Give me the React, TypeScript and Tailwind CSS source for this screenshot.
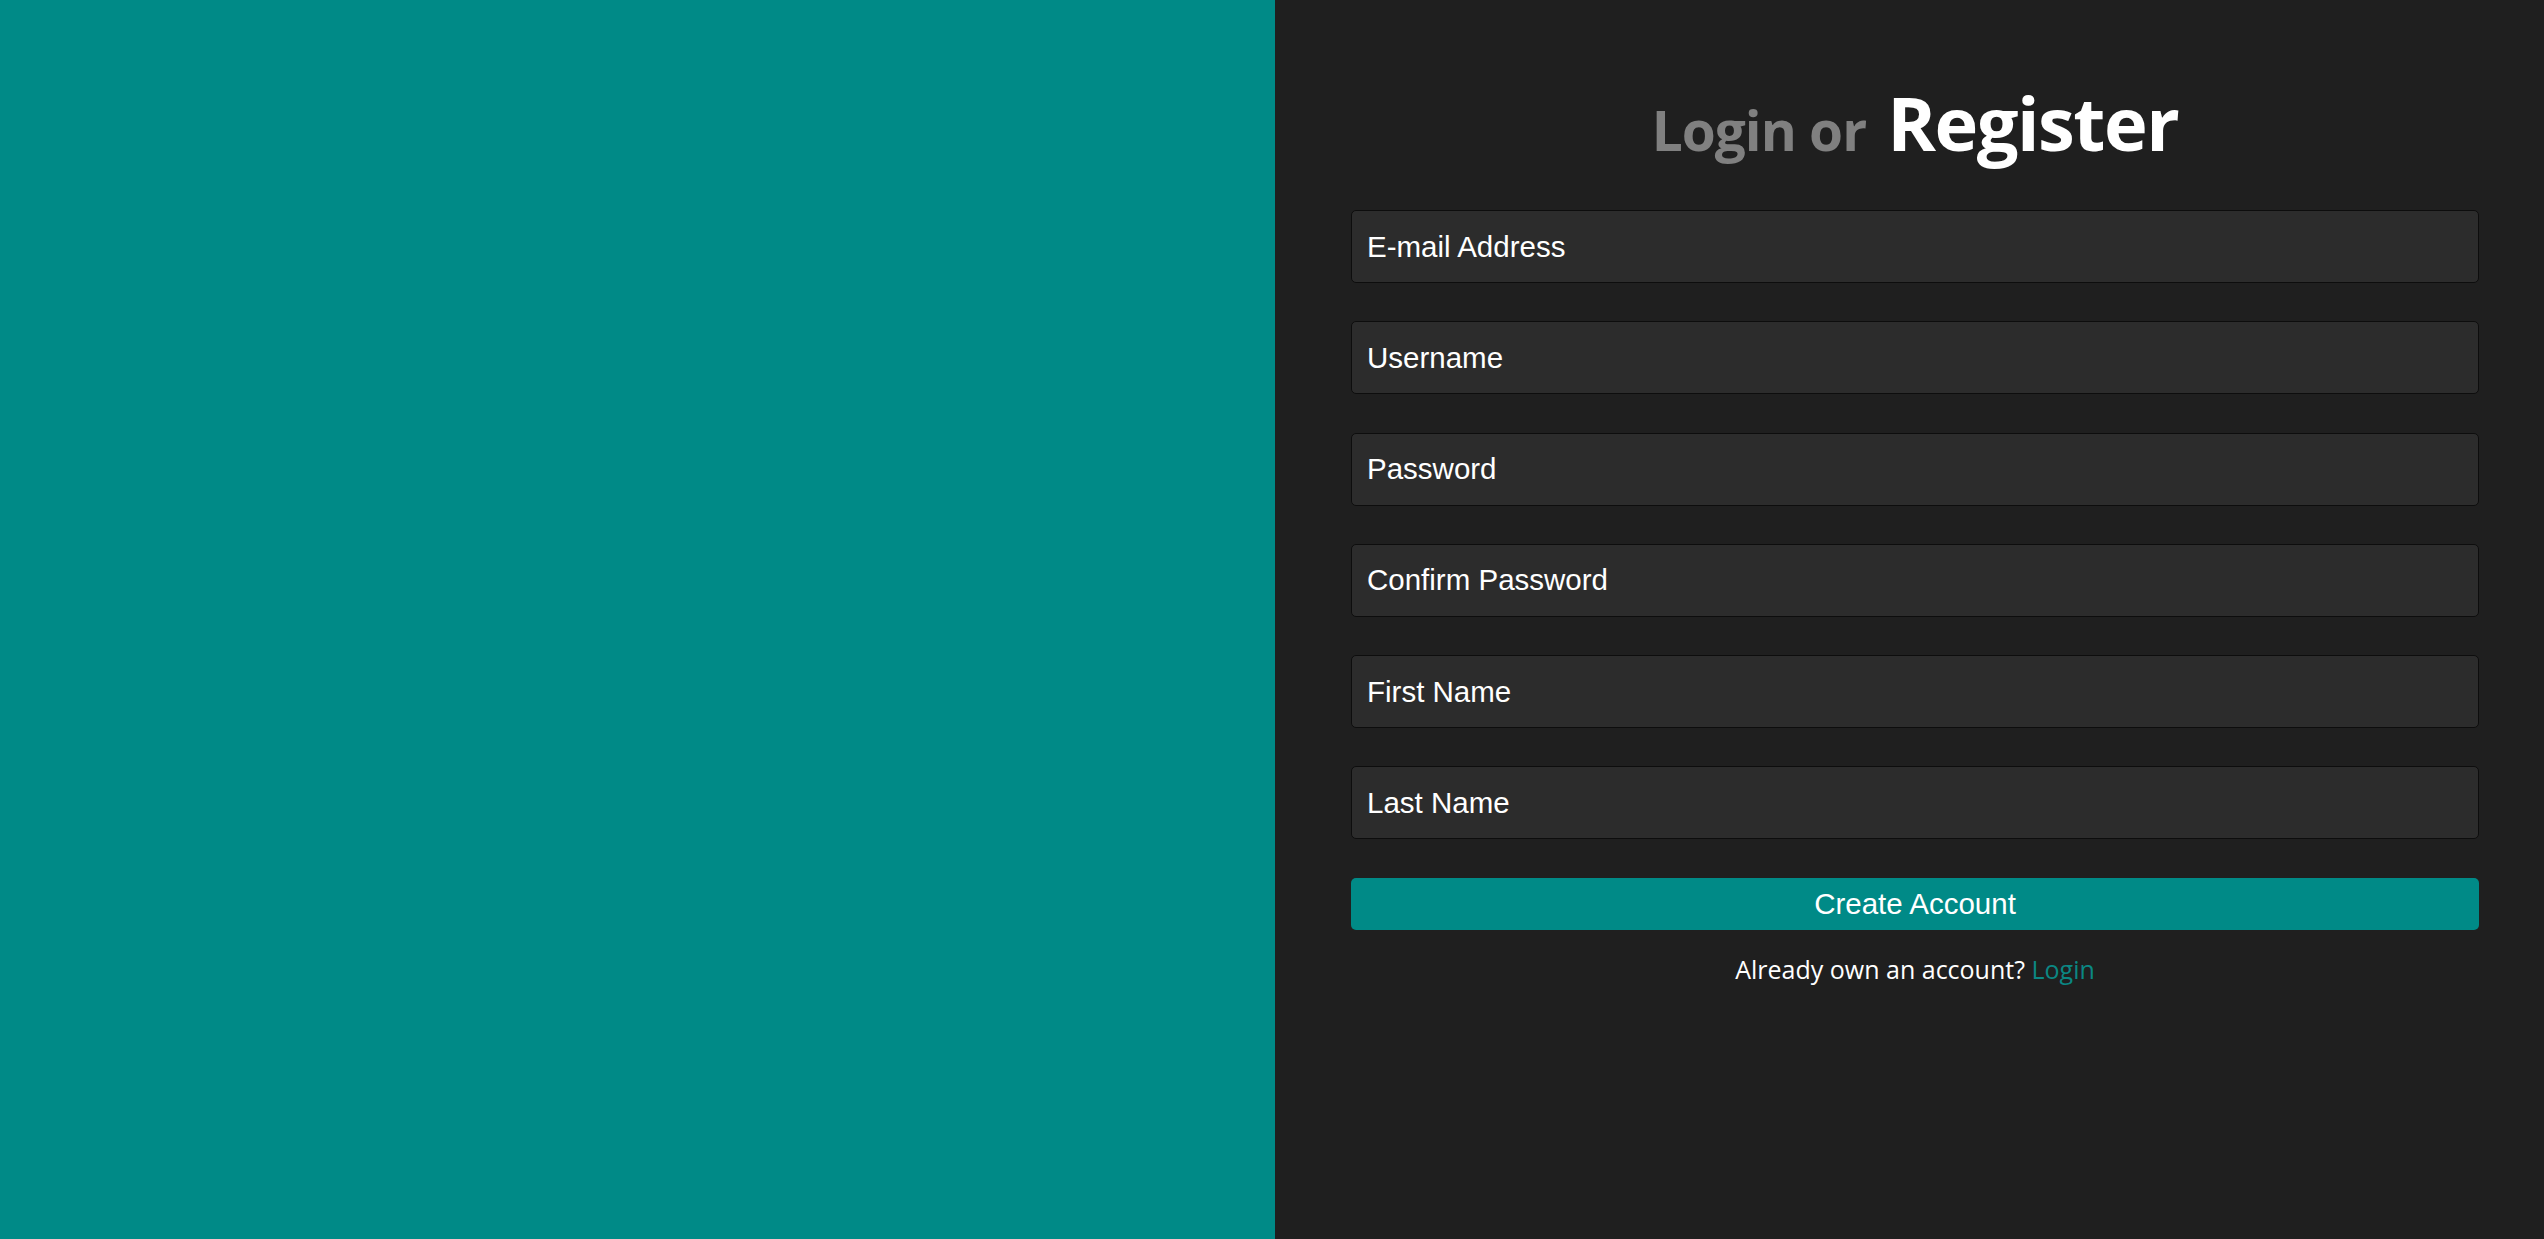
import React from 'react';

const fields = [
  'E-mail Address',
  'Username',
  'Password',
  'Confirm Password',
  'First Name',
  'Last Name',
];

export default function App() {
  return (
    <div className="flex h-[1239px] w-full">
      <div className="w-[1275px] shrink-0 bg-[#008a87]" />

      <div className="flex-1 bg-[#1f1f1f] pl-[76px] pr-[65px] pt-[73px]">
        <h1 className="h-[137px] text-center font-bold leading-[100px] [font-family:'Open_Sans',sans-serif]">
          <span className="text-[55px] tracking-[-1px] text-[#808080]">Login or</span>
          <span className="ml-[21px] text-[74px] tracking-[-1.5px] text-white">Register</span>
        </h1>

        <form className="flex flex-col gap-[38.3px]" onSubmit={(e) => e.preventDefault()}>
          {fields.map((f) => (
            <input
              key={f}
              type={f.includes('Password') ? 'password' : 'text'}
              placeholder={f}
              className="h-[73px] w-full rounded-[5px] border border-[#0d0d0d] bg-[#2c2c2c] px-[15px] text-[29.5px] text-white outline-none placeholder:text-white [font-family:'Liberation_Sans',Arial,sans-serif]"
            />
          ))}
          <button
            type="submit"
            className="h-[52px] w-full rounded-[5px] bg-[#008a87] text-[29.5px] text-white [font-family:'Liberation_Sans',Arial,sans-serif]"
          >
            Create Account
          </button>
        </form>

        <p className="mt-[21px] text-center text-[25px] text-white [font-family:'Open_Sans',sans-serif]">
          Already own an account? <a href="#" className="text-[#0b8783]">Login</a>
        </p>
      </div>
    </div>
  );
}
